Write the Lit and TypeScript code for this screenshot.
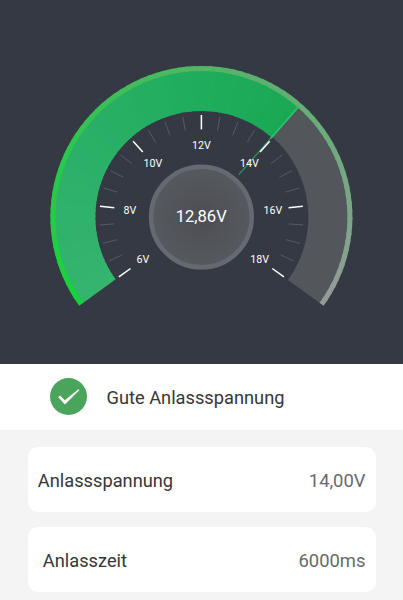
import { LitElement, html, svg, css } from "lit";
import { customElement, property } from "lit/decorators.js";

const CX = 201.4;
const CY = 217;
const SWEEP = 126;

type Rgb = [number, number, number];
type Stop = [number, Rgb];

const RIM: Stop[] = [
  [-126, [20, 212, 58]],
  [-60, [46, 198, 78]],
  [0, [82, 181, 100]],
  [50, [105, 172, 122]],
  [95, [128, 164, 139]],
  [126, [152, 153, 151]],
];
const BAND: Stop[] = [
  [-126, [53, 180, 110]],
  [-45, [41, 175, 101]],
  [0, [31, 173, 93]],
  [42, [27, 168, 85]],
];

function colorAt(stops: Stop[], a: number): string {
  let i = 0;
  while (i < stops.length - 2 && a > stops[i + 1][0]) i++;
  const [a0, c0] = stops[i];
  const [a1, c1] = stops[i + 1];
  const t = Math.max(0, Math.min(1, (a - a0) / (a1 - a0)));
  return `rgb(${c0.map((v, k) => Math.round(v + (c1[k] - v) * t)).join(",")})`;
}

function point(r: number, deg: number): [number, number] {
  const a = (deg * Math.PI) / 180;
  return [CX + r * Math.sin(a), CY - r * Math.cos(a)];
}

function sector(r0: number, r1: number, from: number, to: number): string {
  const large = to - from > 180 ? 1 : 0;
  return `M${point(r1, from)} A${r1} ${r1} 0 ${large} 1 ${point(r1, to)} L${point(r0, to)} A${r0} ${r0} 0 ${large} 0 ${point(r0, from)}Z`;
}

// Overlapping slices, each a step further along the colour ramp.
function shaded(r0: number, r1: number, from: number, to: number, stops: Stop[]) {
  const out = [];
  for (let a = from; a < to; a += 3) {
    const end = Math.min(a + 4, to);
    out.push(svg`<path d=${sector(r0, r1, a, end)} fill=${colorAt(stops, a + 1.5)} />`);
  }
  return out;
}

@customElement("volt-gauge")
export class VoltGauge extends LitElement {
  @property() reading = "";
  @property({ type: Number }) angle = 0;

  static styles = css`
    :host { display: block; height: 364px; background: #353944; }
    svg { display: block; width: 403px; height: 364px; font-family: Roboto, sans-serif; }
    text { fill: #fff; text-anchor: middle; }
    .label { font-size: 10.7px; }
    .reading { font-size: 16.6px; }
    .major { stroke: #fff; stroke-width: 1.5; }
    .minor { stroke: #585b62; stroke-width: 1; }
    .rest { fill: #53565a; }
    .needle { stroke: #27c76b; stroke-width: 1.8; }
    .tail { stroke: #2e9a62; stroke-width: 1.1; }
  `;

  render() {
    const ticks = Array.from({ length: 25 }, (_, i) => {
      const a = -SWEEP + i * 10.5;
      const [x1, y1] = point(102, a);
      const [x2, y2] = point(87.6, a);
      return svg`<line class=${i % 4 ? "minor" : "major"} x1=${x1} y1=${y1} x2=${x2} y2=${y2} />`;
    });
    const labels: [string, number, number][] = [
      ["6V", 143, 263], ["8V", 130, 213.6], ["10V", 153, 167.3], ["12V", 201.4, 149],
      ["14V", 249.5, 167.3], ["16V", 273, 213.6], ["18V", 259.7, 263],
    ];
    const [nx, ny] = point(147, this.angle);
    const [mx, my] = point(105, this.angle);
    const [tx, ty] = point(56.5, this.angle);
    return html`<svg viewBox="0 0 403 364">
      <defs>
        <radialGradient id="knob">
          <stop offset="0" stop-color="#4c4e54" />
          <stop offset="1" stop-color="#56595f" />
        </radialGradient>
      </defs>
      <path class="rest" d=${sector(107, 147, this.angle, SWEEP)} />
      ${shaded(106, 147, -SWEEP, this.angle, BAND)}
      ${shaded(146, 151, -SWEEP, SWEEP, RIM)}
      <line class="tail" x1=${mx} y1=${my} x2=${tx} y2=${ty} />
      ${ticks}
      <line class="needle" x1=${nx} y1=${ny} x2=${mx} y2=${my} />
      ${labels.map(([t, x, y]) => svg`<text class="label" x=${x} y=${y}>${t}</text>`)}
      <circle cx=${CX} cy=${CY} r="50.3" fill="url(#knob)" stroke="#666970" stroke-width="4.6" />
      <text class="reading" x="201.2" y="222.4">${this.reading}</text>
    </svg>`;
  }
}

@customElement("app-root")
export class AppRoot extends LitElement {
  static styles = css`
    :host {
      display: flex; flex-direction: column; height: 600px; overflow: hidden;
      background: #f4f4f4; color: #363636; font: 18.25px/24px Roboto, sans-serif;
    }
    .status {
      display: flex; align-items: center; box-sizing: border-box; height: 66px;
      padding: 0 0 0 50px; gap: 19.5px; background: #fff;
    }
    .status svg { width: 37px; height: 37px; margin-bottom: 1px; }
    .message { padding-top: 2px; }
    .cards { display: flex; flex-direction: column; gap: 15px; padding: 17px 27.5px 0 27.5px; }
    .card {
      display: flex; justify-content: space-between; align-items: center;
      box-sizing: border-box; height: 65px; padding: 2px 10px 0 10.3px;
      background: #fff; border-radius: 10px;
    }
    .inset { padding-left: 15.3px; }
    .value { color: #696969; font-size: 18.4px; }
  `;

  render() {
    return html`
      <volt-gauge reading="12,86V" .angle=${41.4}></volt-gauge>
      <div class="status">
        <svg viewBox="0 0 37 37">
          <circle cx="18.5" cy="18.5" r="18.5" fill="#4ba45c" />
          <path d="M8.2 19.2L10.1 17.5L14.8 22.2L28.3 11.2L29.4 12.1L15 26.6Z" fill="#fff" />
        </svg>
        <span class="message">Gute Anlassspannung</span>
      </div>
      <div class="cards">
        <div class="card"><span>Anlassspannung</span><span class="value">14,00V</span></div>
        <div class="card inset"><span>Anlasszeit</span><span class="value">6000ms</span></div>
      </div>
    `;
  }
}
